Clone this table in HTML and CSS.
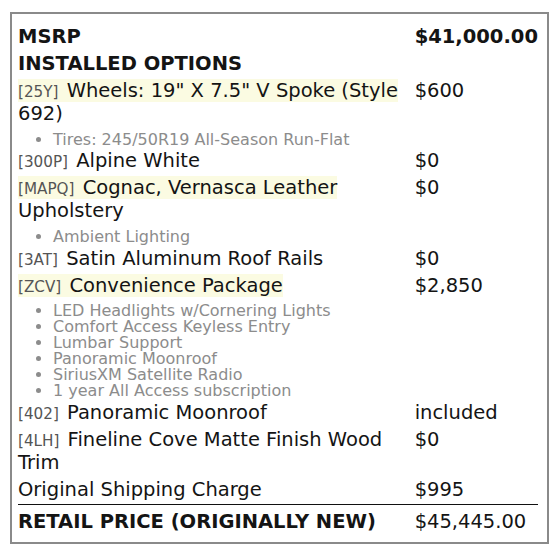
FILE: index.html
```html
<!DOCTYPE html>
<html>
<head>
<meta charset="utf-8">
<link rel="stylesheet" href="styles.css">
</head>
<body>
<div class="sheet">
  <div class="desc head">MSRP</div><div class="price head">$41,000.00</div>
  <div class="desc head">INSTALLED OPTIONS</div><div class="price"></div>

  <div class="desc hl"><span class="code">[25Y]</span> Wheels: 19" X 7.5" V Spoke (Style 692)
    <ul class="sub"><li>Tires: 245/50R19 All-Season Run-Flat</li></ul>
  </div><div class="price">$600</div>

  <div class="desc"><span class="code">[300P]</span> Alpine White</div><div class="price">$0</div>

  <div class="desc hl"><span class="code">[MAPQ]</span> Cognac, Vernasca Leather Upholstery
    <ul class="sub"><li>Ambient Lighting</li></ul>
  </div><div class="price">$0</div>

  <div class="desc"><span class="code">[3AT]</span> Satin Aluminum Roof Rails</div><div class="price">$0</div>

  <div class="desc hl"><span class="code">[ZCV]</span> Convenience Package
    <ul class="sub">
      <li>LED Headlights w/Cornering Lights</li>
      <li>Comfort Access Keyless Entry</li>
      <li>Lumbar Support</li>
      <li>Panoramic Moonroof</li>
      <li>SiriusXM Satellite Radio</li>
      <li>1 year All Access subscription</li>
    </ul>
  </div><div class="price">$2,850</div>

  <div class="desc"><span class="code">[402]</span> Panoramic Moonroof</div><div class="price">included</div>

  <div class="desc"><span class="code">[4LH]</span> Fineline Cove Matte Finish Wood Trim</div><div class="price">$0</div>

  <div class="desc">Original Shipping Charge</div><div class="price">$995</div>

  <div class="rule"></div>
  <div class="desc total head">RETAIL PRICE (ORIGINALLY NEW)</div><div class="price total">$45,445.00</div>
</div>
</body>
</html>
```

FILE: styles.css
```css
html, body {
  margin: 0;
  padding: 0;
  background: #ffffff;
}

body {
  font-family: "DejaVu Sans", "Liberation Sans", sans-serif;
  color: #141414;
}

.sheet {
  margin: 12px 0 0 10px;
  width: 520px;
  border: 2px solid #8a8a8a;
  padding: 9px 9px 7px 6px;
  display: grid;
  grid-template-columns: 1fr auto;
  column-gap: 8px;
  font-size: 19.5px;
  line-height: normal;
}

.desc,
.price {
  padding: 2px 0;
}

.head {
  font-weight: bold;
}

.code {
  font-size: 15.2px;
  color: #555555;
  margin-right: 2px;
}

.hl::first-line {
  background: #fbfbe2;
}

.sub {
  margin: 6.6px 0 -2.3px 0;
  padding: 0 0 0 35px;
  list-style: disc;
  font-size: 16px;
  line-height: 16px;
  color: #8c8c8c;
}

.rule {
  grid-column: 1 / -1;
  border-top: 1px solid #111111;
  margin-top: 1px;
}

.total {
  padding-top: 5px;
}
```
